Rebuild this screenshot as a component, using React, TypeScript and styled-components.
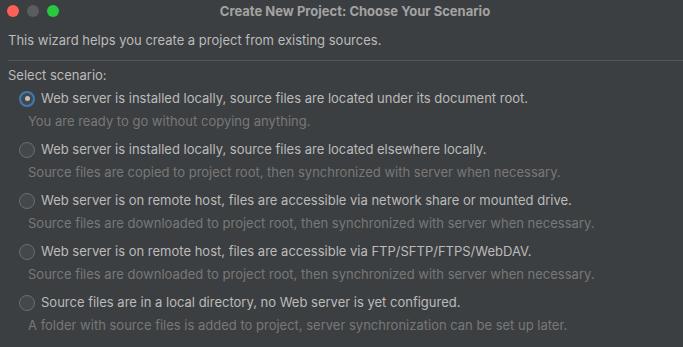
import React from "react";
import styled, { createGlobalStyle } from "styled-components";

const GlobalStyle = createGlobalStyle`
  html, body {
    margin: 0;
    padding: 0;
    background: #3c3f41;
  }
  body {
    font-family: "Inter", "Liberation Sans", sans-serif;
    -webkit-font-smoothing: antialiased;
  }
`;

type Scenario = {
  label: string;
  hint: string;
};

const scenarios: Scenario[] = [
  {
    label:
      "Web server is installed locally, source files are located under its document root.",
    hint: "You are ready to go without copying anything.",
  },
  {
    label:
      "Web server is installed locally, source files are located elsewhere locally.",
    hint: "Source files are copied to project root, then synchronized with server when necessary.",
  },
  {
    label:
      "Web server is on remote host, files are accessible via network share or mounted drive.",
    hint: "Source files are downloaded to project root, then synchronized with server when necessary.",
  },
  {
    label:
      "Web server is on remote host, files are accessible via FTP/SFTP/FTPS/WebDAV.",
    hint: "Source files are downloaded to project root, then synchronized with server when necessary.",
  },
  {
    label: "Source files are in a local directory, no Web server is yet configured.",
    hint: "A folder with source files is added to project, server synchronization can be set up later.",
  },
];

function App() {
  const selected = 0;
  return (
    <>
      <GlobalStyle />
      <Window>
        <TitleBar>
          <Lights>
            <Light color="#fe5f57" />
            <Light color="#5a5c5f" />
            <Light color="#28c840" />
          </Lights>
          <Title>Create New Project: Choose Your Scenario</Title>
        </TitleBar>
        <Intro>This wizard helps you create a project from existing sources.</Intro>
        <Separator />
        <Caption>Select scenario:</Caption>
        <Options>
          {scenarios.map((s, i) => (
            <Option key={i}>
              <OptionRow>
                <Radio checked={i === selected} />
                <Label>{s.label}</Label>
              </OptionRow>
              <Hint>{s.hint}</Hint>
            </Option>
          ))}
        </Options>
      </Window>
    </>
  );
}

export default App;

const Window = styled.div`
  width: 683px;
  height: 347px;
  background: #3c3f41;
  overflow: hidden;
  display: flex;
  flex-direction: column;
`;

const TitleBar = styled.div`
  height: 21px;
  display: flex;
  align-items: center;
`;

const Lights = styled.div`
  display: flex;
  gap: 8px;
  padding-left: 7px;
`;

const Light = styled.span<{ color: string }>`
  width: 12px;
  height: 12px;
  border-radius: 50%;
  background: ${(p) => p.color};
`;

const Title = styled.div`
  flex: 1;
  text-align: center;
  margin-left: -52px;
  padding-left: 20px;
  font-size: 13px;
  font-weight: 700;
  color: #a3a3a3;
`;

const Intro = styled.div`
  margin-top: 11px;
  padding-left: 8px;
  font-size: 13px;
  color: #bbbbbb;
`;

const Separator = styled.div`
  height: 1px;
  margin: 12px 0 0 8px;
  background: #535658;
`;

const Caption = styled.div`
  margin-top: 6px;
  padding-left: 8px;
  font-size: 13px;
  color: #bbbbbb;
`;

const Options = styled.div`
  display: flex;
  flex-direction: column;
  gap: 11px;
  padding-left: 19px;
  margin-top: 7px;
`;

const Option = styled.div`
  display: flex;
  flex-direction: column;
  gap: 6px;
`;

const OptionRow = styled.div`
  display: flex;
  align-items: center;
  gap: 6px;
`;

const Radio = styled.span<{ checked: boolean }>`
  box-sizing: border-box;
  width: 16px;
  height: 16px;
  border-radius: 50%;
  background: #43494a;
  border: ${(p) => (p.checked ? "2.5px solid #3f7ab8" : "1px solid #6b6e70")};
  display: flex;
  align-items: center;
  justify-content: center;
  &::after {
    content: "";
    display: ${(p) => (p.checked ? "block" : "none")};
    width: 5px;
    height: 5px;
    border-radius: 50%;
    background: #c0c0c0;
  }
`;

const Label = styled.span`
  font-size: 13px;
  line-height: 17px;
  color: #bbbbbb;
`;

const Hint = styled.div`
  padding-left: 9px;
  font-size: 13px;
  line-height: 17px;
  color: #787878;
`;
